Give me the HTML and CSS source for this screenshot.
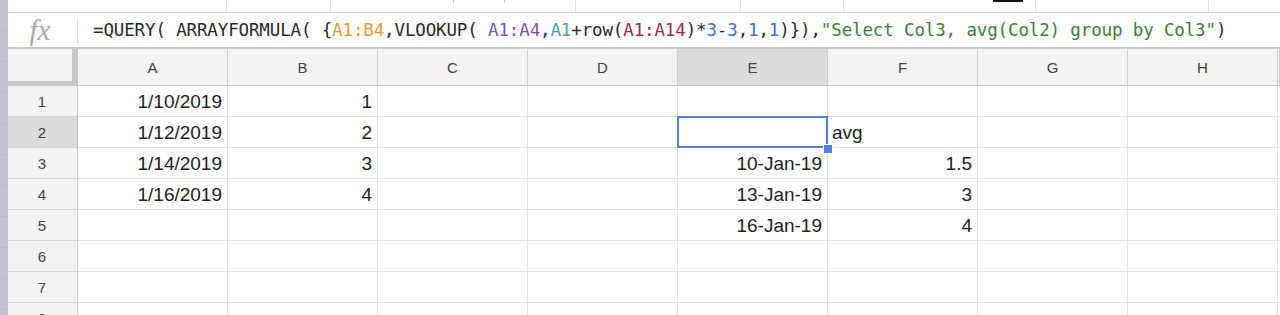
FILE: index.html
```html
<!DOCTYPE html>
<html lang="en">
<head>
    <meta charset="UTF-8">
    <meta name="viewport" content="width=device-width, initial-scale=1.0">
    <title>QUERY group by</title>
    <link rel="stylesheet" href="styles.css">
</head>
<body>
    <div class="screen">
        <div class="edge"></div>
        <div class="app">
            <div class="toolbar">
                <span class="tb"></span>
                <span class="tb"></span>
                <span class="tb"><i class="tick t1"></i><i class="tick t2"></i></span>
                <span class="tb"></span>
                <span class="tb"></span>
                <span class="tb"><i class="black-bar"></i></span>
                <span class="tb"></span>
                <span class="tb last"></span>
            </div>

            <div class="formula-bar">
                <div class="fx">fx</div>
                <div class="sep"></div>
                <div class="formula">=QUERY( ARRAYFORMULA( {<span class="r1">A1:B4</span>,VLOOKUP( <span class="r2">A1:A4</span>,<span class="r3">A1</span>+row(<span class="r4">A1:A14</span>)*<span class="n">3</span>-<span class="n">3</span>,<span class="n">1</span>,<span class="n">1</span>)}),<span class="s">"Select Col3, avg(Col2) group by Col3"</span>)</div>
            </div>

            <div class="sheet">
                <div class="row head">
                    <div class="corner"></div>
                    <div class="col">A</div>
                    <div class="col">B</div>
                    <div class="col">C</div>
                    <div class="col">D</div>
                    <div class="col active">E</div>
                    <div class="col">F</div>
                    <div class="col">G</div>
                    <div class="col">H</div>
                    <div class="col"></div>
                </div>
                <div class="row">
                    <div class="rh">1</div>
                    <div class="cell num">1/10/2019</div>
                    <div class="cell num">1</div>
                    <div class="cell"></div>
                    <div class="cell"></div>
                    <div class="cell"></div>
                    <div class="cell"></div>
                    <div class="cell"></div>
                    <div class="cell"></div>
                    <div class="cell"></div>
                </div>
                <div class="row">
                    <div class="rh active">2</div>
                    <div class="cell num">1/12/2019</div>
                    <div class="cell num">2</div>
                    <div class="cell"></div>
                    <div class="cell"></div>
                    <div class="cell sel"><span class="handle"></span></div>
                    <div class="cell">avg</div>
                    <div class="cell"></div>
                    <div class="cell"></div>
                    <div class="cell"></div>
                </div>
                <div class="row">
                    <div class="rh">3</div>
                    <div class="cell num">1/14/2019</div>
                    <div class="cell num">3</div>
                    <div class="cell"></div>
                    <div class="cell"></div>
                    <div class="cell num">10-Jan-19</div>
                    <div class="cell num">1.5</div>
                    <div class="cell"></div>
                    <div class="cell"></div>
                    <div class="cell"></div>
                </div>
                <div class="row">
                    <div class="rh">4</div>
                    <div class="cell num">1/16/2019</div>
                    <div class="cell num">4</div>
                    <div class="cell"></div>
                    <div class="cell"></div>
                    <div class="cell num">13-Jan-19</div>
                    <div class="cell num">3</div>
                    <div class="cell"></div>
                    <div class="cell"></div>
                    <div class="cell"></div>
                </div>
                <div class="row">
                    <div class="rh">5</div>
                    <div class="cell"></div>
                    <div class="cell"></div>
                    <div class="cell"></div>
                    <div class="cell"></div>
                    <div class="cell num">16-Jan-19</div>
                    <div class="cell num">4</div>
                    <div class="cell"></div>
                    <div class="cell"></div>
                    <div class="cell"></div>
                </div>
                <div class="row">
                    <div class="rh">6</div>
                    <div class="cell"></div>
                    <div class="cell"></div>
                    <div class="cell"></div>
                    <div class="cell"></div>
                    <div class="cell"></div>
                    <div class="cell"></div>
                    <div class="cell"></div>
                    <div class="cell"></div>
                    <div class="cell"></div>
                </div>
                <div class="row">
                    <div class="rh">7</div>
                    <div class="cell"></div>
                    <div class="cell"></div>
                    <div class="cell"></div>
                    <div class="cell"></div>
                    <div class="cell"></div>
                    <div class="cell"></div>
                    <div class="cell"></div>
                    <div class="cell"></div>
                    <div class="cell"></div>
                </div>
                <div class="row">
                    <div class="rh">8</div>
                    <div class="cell"></div>
                    <div class="cell"></div>
                    <div class="cell"></div>
                    <div class="cell"></div>
                    <div class="cell"></div>
                    <div class="cell"></div>
                    <div class="cell"></div>
                    <div class="cell"></div>
                    <div class="cell"></div>
                </div>
            </div>
        </div>
    </div>
</body>
</html>
```

FILE: styles.css
```css
html, body {
    margin: 0;
    height: 315px;
    overflow: hidden;
    background-color: #fff;
    font-family: "Liberation Sans", Arial, sans-serif;
}

.screen {
    display: flex;
    height: 315px;
}

/* edge of the window behind */
.edge {
    width: 8px;
    flex-shrink: 0;
    background-color: #c3c3d1;
    background-image: repeating-linear-gradient(#c3c3d1 0, #c3c3d1 30px, #bcbccb 30px, #bcbccb 31px);
}

.app {
    flex: 1;
    min-width: 0;
    overflow: hidden;
}

/* cut-off toolbar at the top */
.toolbar {
    display: grid;
    grid-template-columns: 219px 104px 245px 165px 103px 192px 173px 1fr;
    height: 12px;
    border-bottom: 1px solid #d8d8d8;
}

.tb {
    position: relative;
    border-right: 1px solid #e4e4e4;
}

.tb.last {
    border-right: none;
}

.tick {
    position: absolute;
    top: 0;
    width: 1px;
    height: 3px;
    background-color: #c8c8c8;
}

.t1 { left: 122px; }
.t2 { left: 173px; }

.black-bar {
    position: absolute;
    top: 0;
    left: 149px;
    width: 30px;
    height: 2px;
    background-color: #111;
}

.formula-bar {
    display: flex;
    align-items: center;
    height: 34px;
}

.fx {
    width: 64px;
    padding-right: 5px;
    text-align: center;
    font-family: "Liberation Serif", "Times New Roman", serif;
    font-style: italic;
    font-size: 29px;
    color: #a8a8a8;
    line-height: 34px;
}

.sep {
    width: 1px;
    height: 25px;
    background-color: #dcdcdc;
}

.formula {
    padding-left: 15px;
    font-family: "DejaVu Sans Mono", monospace;
    font-size: 17.5px;
    letter-spacing: -0.14px;
    color: #2a2a2a;
    white-space: nowrap;
}

.r1 { color: #e69a35; }
.r2 { color: #7d55a4; }
.r3 { color: #3fa3c4; }
.r4 { color: #a3264f; }
.n  { color: #3b73d1; }
.s  { color: #3b7d3b; }

.sheet {
    border-top: 2px solid #c9c9c9;
}

.row {
    display: grid;
    grid-template-columns: 70px repeat(8, 150px) 1fr;
    height: 31px;
}

.row.head {
    height: 37px;
}

.corner {
    background-color: #f3f3f3;
    border-right: 6px solid #c6c6c6;
    border-bottom: 5px solid #c6c6c6;
}

.col {
    display: flex;
    align-items: center;
    justify-content: center;
    background-color: #f3f3f3;
    border-right: 1px solid #cfcfcf;
    border-bottom: 1px solid #c4c4c4;
    font-size: 15px;
    color: #444;
    padding-top: 1px;
}

.col.active,
.rh.active {
    background-color: #dcdcdc;
}

.rh {
    display: flex;
    align-items: center;
    justify-content: center;
    background-color: #f3f3f3;
    border-right: 1px solid #c6c6c6;
    border-bottom: 1px solid #d6d6d6;
    font-size: 15px;
    color: #444;
    padding-right: 1px;
}

.cell {
    border-right: 1px solid #e2e2e2;
    border-bottom: 1px solid #e2e2e2;
    padding: 1px 5px 0 4px;
    font-size: 19px;
    line-height: 29px;
    color: #222;
    white-space: nowrap;
}

.cell.num {
    text-align: right;
}

.cell.sel {
    position: relative;
    z-index: 2;
}

.cell.sel::before {
    content: "";
    position: absolute;
    top: -1px;
    left: -1px;
    right: -1px;
    bottom: -1px;
    border: 2px solid #4d81dd;
}

.handle {
    position: absolute;
    right: -5px;
    bottom: -6px;
    width: 8px;
    height: 8px;
    background-color: #4d81dd;
    box-shadow: 0 0 0 1px #fff;
}
```
